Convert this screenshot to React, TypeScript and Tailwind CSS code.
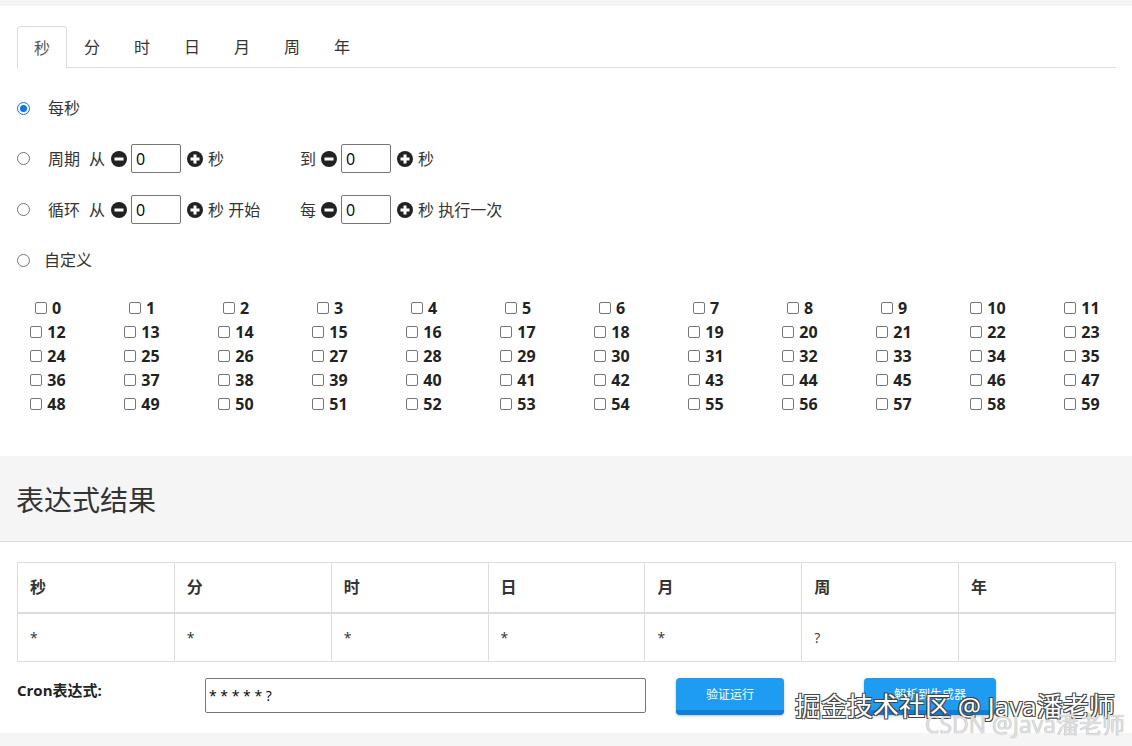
import React from 'react';

const font = { fontFamily: '"Open Sans", "Noto Sans CJK SC", sans-serif' };

const tabs = ['秒', '分', '时', '日', '月', '周', '年'];

const CircleIcon = ({ plus }: { plus?: boolean }) => (
  <svg width="16" height="16" viewBox="0 0 16 16" className="shrink-0">
    <circle cx="8" cy="8" r="8" fill="#222" />
    <rect x="3.5" y="6.5" width="9" height="3" fill="#fff" />
    {plus && <rect x="6.5" y="3.5" width="3" height="9" fill="#fff" />}
  </svg>
);

const NumInput = () => (
  <div className="w-[50px] h-[29px] border border-[#767676] rounded-[2px] bg-white flex items-center pl-[4px] text-[16px] text-black">
    0
  </div>
);

const Stepper = () => (
  <div className="flex items-center gap-[4px]">
    <CircleIcon />
    <NumInput />
    <span className="ml-[2px]"><CircleIcon plus /></span>
  </div>
);

const Radio = ({ checked }: { checked?: boolean }) => (
  <span
    className={
      checked
        ? 'w-[13px] h-[13px] rounded-full border-[1.5px] border-[#0b74e8] flex items-center justify-center shrink-0'
        : 'w-[13px] h-[13px] rounded-full border border-[#767676] shrink-0'
    }
  >
    {checked && <span className="w-[7px] h-[7px] rounded-full bg-[#0b74e8]" />}
  </span>
);

const App: React.FC = () => {
  const headers = ['秒', '分', '时', '日', '月', '周', '年'];
  const values = ['*', '*', '*', '*', '*', '?', ''];

  return (
    <div className="w-[1132px] h-[746px] bg-[#f5f5f5] overflow-hidden relative text-[#333]" style={font}>
      {/* generator panel */}
      <div className="mt-[6px] bg-white h-[450px] pl-[17px] pr-[16px] pt-[20px]">
        <div className="flex border-b border-[#ddd] h-[42px]">
          {tabs.map((t, i) => (
            <div
              key={t}
              className={
                i === 0
                  ? 'w-[50px] h-[43px] -mb-px border border-[#ddd] border-b-white bg-white rounded-t-[4px] flex items-center justify-center text-[16px] text-[#555]'
                  : 'w-[50px] h-[42px] flex items-center justify-center text-[16px] text-[#333]'
              }
            >
              {t}
            </div>
          ))}
        </div>

        <div className="pt-[15px] text-[16px]">
          <div className="h-[50px] flex items-center">
            <Radio checked />
            <span className="ml-[18px]">每秒</span>
          </div>
          <div className="h-[51px] flex items-center">
            <Radio />
            <span className="ml-[18px]">周期</span>
            <span className="ml-[9px] mr-[6px]">从</span>
            <Stepper />
            <span className="ml-[5px] w-[92px]">秒</span>
            <span className="mr-[5px]">到</span>
            <Stepper />
            <span className="ml-[5px]">秒</span>
          </div>
          <div className="h-[51px] flex items-center">
            <Radio />
            <span className="ml-[18px]">循环</span>
            <span className="ml-[9px] mr-[6px]">从</span>
            <Stepper />
            <span className="ml-[5px] w-[92px]">秒 开始</span>
            <span className="mr-[5px]">每</span>
            <Stepper />
            <span className="ml-[5px]">秒 执行一次</span>
          </div>
          <div className="h-[50px] flex items-center">
            <Radio />
            <span className="ml-[14px]">自定义</span>
          </div>
        </div>

        <div className="-ml-[16px] w-[1128px] mt-[11px] grid grid-cols-12">
          {Array.from({ length: 60 }, (_, n) => (
            <div key={n} className="h-[24px] flex items-center justify-center gap-[5px]">
              <span className="w-[12px] h-[12px] border border-[#767676] rounded-[2px] bg-white" />
              <span className="text-[16px] font-bold text-[#222] leading-none">{n}</span>
            </div>
          ))}
        </div>
      </div>

      {/* result panel */}
      <div className="h-[86px] bg-[#f5f5f5] border-b border-[#ddd] flex items-center pl-[16px] pt-[3px]">
        <h2 className="text-[28px] font-normal text-[#333] leading-none">表达式结果</h2>
      </div>
      <div className="bg-white h-[191px] pl-[17px] pr-[16px] pt-[20px]">
        <table className="w-[1099px] border-collapse table-fixed text-[16px]">
          <thead>
            <tr className="h-[50px]">
              {headers.map((h) => (
                <th key={h} className="border border-[#ddd] border-b-2 text-left font-bold pl-[12px] text-[#333]">
                  {h}
                </th>
              ))}
            </tr>
          </thead>
          <tbody>
            <tr className="h-[49px]">
              {values.map((v, i) => (
                <td key={i} className="border border-[#ddd] pl-[12px] text-[14px] text-[#333]">
                  {v}
                </td>
              ))}
            </tr>
          </tbody>
        </table>

        <div className="flex items-start mt-[16px]">
          <div className="w-[188px] text-[15px] font-bold text-[#222] pt-[1px]">Cron表达式:</div>
          <div className="w-[441px] h-[35px] border border-[#767676] rounded-[2px] flex items-center pl-[3px] text-[14px] text-black">
            * * * * * ?
          </div>
          <button className="ml-[30px] w-[108px] h-[37px] rounded-[4px] bg-[#1e9cf2] border-b-[5px] border-[#0d7fd8] text-white text-[12px] shadow-[0_1px_3px_rgba(0,0,0,0.25)] flex items-center justify-center pt-[2px]">
            验证运行
          </button>
          <button className="ml-[80px] w-[132px] h-[37px] rounded-[4px] bg-[#1e9cf2] border-b-[5px] border-[#0d7fd8] text-white text-[12px] shadow-[0_1px_3px_rgba(0,0,0,0.25)] flex items-center justify-center pt-[2px]">
            解析到生成器
          </button>
        </div>
      </div>

      {/* watermarks */}
      <div className="absolute left-[795px] top-[693px] text-[26px] leading-none text-white [text-shadow:-1px_-1px_0_#444,1px_-1px_0_#444,-1px_1px_0_#444,1px_1px_0_#444]">
        掘金技术社区 @ Java潘老师
      </div>
      <div className="absolute left-[925px] top-[713px] text-[23px] leading-none text-[#e0e0e0] [text-shadow:0_0_1px_#999]">
        CSDN @Java潘老师
      </div>
    </div>
  );
};

export default App;
